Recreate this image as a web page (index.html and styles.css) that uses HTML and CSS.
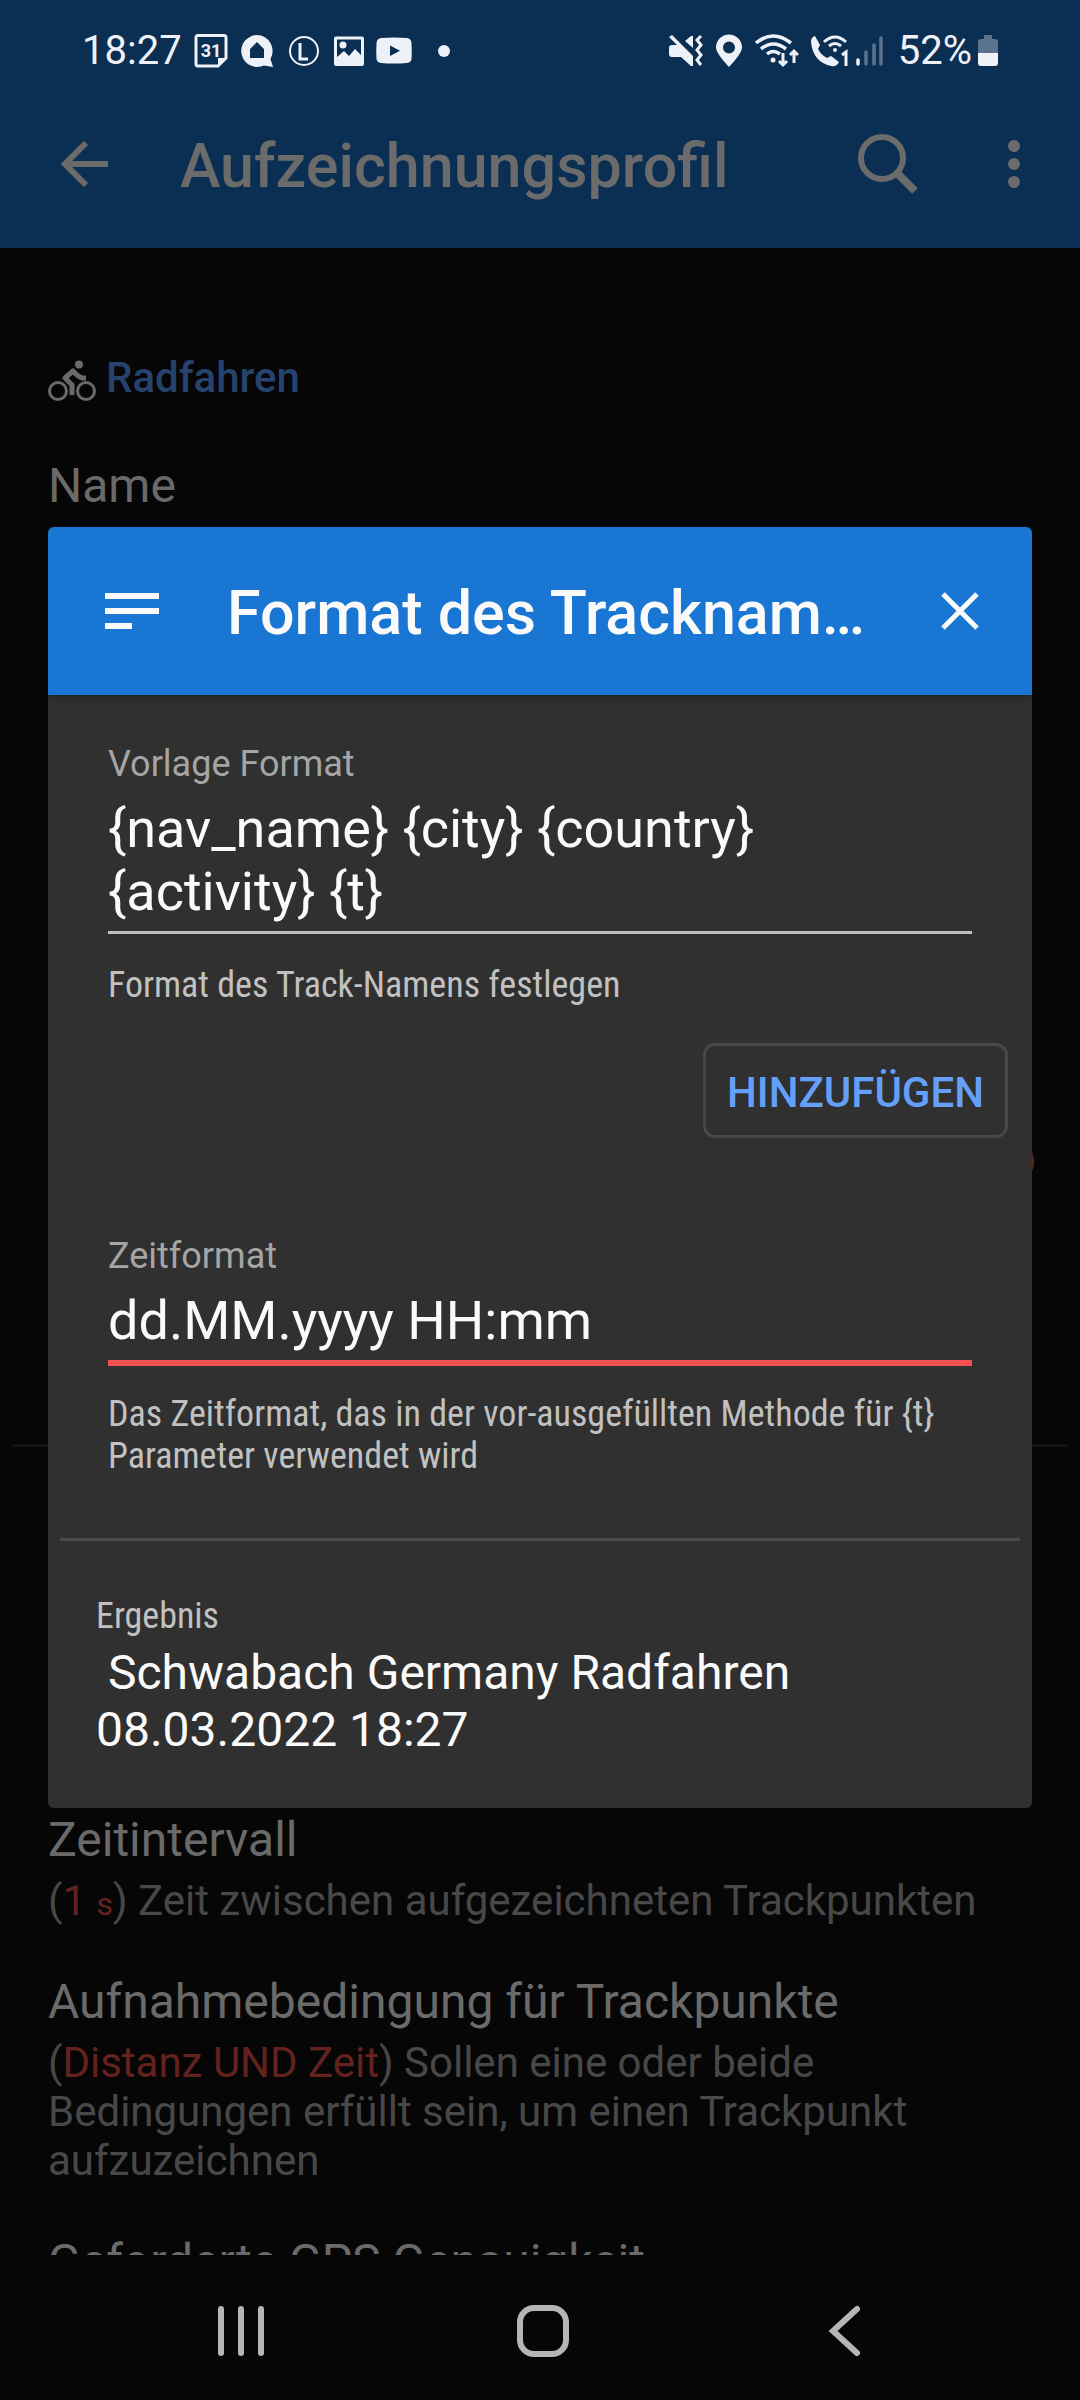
FILE: index.html
```html
<!DOCTYPE html>
<html lang="de">
<head>
<meta charset="utf-8">
<meta name="viewport" content="width=device-width, initial-scale=1">
<title>Aufzeichnungsprofil</title>
<link rel="stylesheet" href="styles.css">
</head>
<body>
<div class="screen">
  <div class="status-bar">
    <div class="status-group">
      <span class="clock">18:27</span>
      <svg class="status-icon" width="34" height="36" viewBox="0 0 34 36"><path d="M4 2.500H30Q32 2.500 32 4.500V25L24 33H4Q2 33 2 31V4.500Q2 2.500 4 2.500Z" fill="none" stroke="currentColor" stroke-width="3"/><path d="M24 33V25H32Z" fill="currentColor"/><text x="17" y="24" text-anchor="middle" class="icon-date">31</text></svg>
      <svg class="status-icon" width="34" height="36" viewBox="0 0 34 36"><path d="M17 2A16 16 0 1 0 24 32.500L33 34L30.500 26A16 16 0 0 0 17 2ZM17 9L24 16V25H10V16Z" fill="currentColor" fill-rule="evenodd"/></svg>
      <svg class="status-icon icon-wide-gap" width="32" height="36" viewBox="0 0 32 36"><circle cx="16" cy="18" r="14" fill="none" stroke="currentColor" stroke-width="2"/><path d="M12 10V26H20" fill="none" stroke="currentColor" stroke-width="3"/></svg>
      <svg class="status-icon" width="30" height="36" viewBox="0 0 30 36"><path d="M2 3.500H28Q30 3.500 30 5.500V31Q30 33 28 33H2Q0 33 0 31V5.500Q0 3.500 2 3.500ZM3 6.500V24L10 18L15 23L21 16L27 22V6.500Z" fill="currentColor" fill-rule="evenodd"/><circle cx="9" cy="12" r="3.500" fill="currentColor"/></svg>
      <svg class="status-icon" width="36" height="36" viewBox="0 0 36 36"><path d="M5 5Q18 4 31 5Q35 5.500 35.500 10Q36 18 35.500 26Q35 29.500 31 30Q18 31 5 30Q1 29.500 .5 26Q0 18 .5 10Q1 5.500 5 5ZM14 12.500V23L24 17.700Z" fill="currentColor" fill-rule="evenodd"/></svg>
      <span class="more-dot"></span>
    </div>
    <div class="status-group">
      <svg class="status-icon" width="34" height="36" viewBox="0 0 34 36"><path d="M3 12H8L0 4L3 2L24 23V33H22L12 24H3Q0 24 0 21V15Q0 12 3 12ZM22 3H24V15L16 8Z" fill="currentColor"/><path d="M32 3L28 7L32 12L28 17L32 22L28 27L32 32" fill="none" stroke="currentColor" stroke-width="3"/></svg>
      <svg class="status-icon" width="28" height="36" viewBox="0 0 28 36"><path d="M14 1.500A13 13 0 0 0 1 14.500Q1 20 14 34Q27 20 27 14.500A13 13 0 0 0 14 1.500ZM14 8.500A6 6 0 1 1 14 20.500A6 6 0 1 1 14 8.500Z" fill="currentColor" fill-rule="evenodd"/></svg>
      <svg class="status-icon" width="44" height="36" viewBox="0 0 44 36"><g fill="none" stroke="currentColor" stroke-width="3.500"><path d="M1 10Q18 -4 36 10"/><path d="M6 16Q18 6 31 16"/><path d="M12 21Q18 16 25 21"/><path d="M28 20V32M24 28L28 32L32 28M39 30V18M35 22L39 18L43 22" stroke-width="3"/></g><circle cx="18" cy="27" r="2.500" fill="currentColor"/></svg>
      <svg class="status-icon" width="37" height="36" viewBox="0 0 37 36"><path d="M4 3L9 12L7 16Q10 22 16 25L20 23L28 29Q26 34 20 33Q2 29 0 9Q0 4 4 3Z" fill="currentColor"/><g fill="none" stroke="currentColor" stroke-width="3"><path d="M13 9Q24 -1 35 9"/><path d="M18 13Q24 8 30 13"/><path d="M31 22L35 19V33"/></g><circle cx="24" cy="17" r="2" fill="currentColor"/></svg>
      <svg class="status-icon signal" width="28" height="36" viewBox="0 0 28 36"><g stroke="currentColor" stroke-width="3.500" stroke-linecap="round"><path d="M2 27V31"/><g opacity=".35"><path d="M10 19V31M18 12V31M25 5V31"/></g></g></svg>
      <span class="battery-level">52%</span>
      <svg class="status-icon" width="20" height="36" viewBox="0 0 20 36"><path d="M6 2H14V6H17Q20 6 20 9V20H0V9Q0 6 3 6H6Z" fill="currentColor" opacity=".35"/><path d="M0 20H20V30Q20 33 17 33H3Q0 33 0 30Z" fill="currentColor"/></svg>
    </div>
  </div>

  <header class="app-bar">
    <button class="icon-button" aria-label="Zurück"><svg width="48" height="48" viewBox="0 0 48 48" fill="none" stroke="currentColor" stroke-width="6"><path d="M26 3L5 24L26 45M5 24H48"/></svg></button>
    <h1 class="app-title">Aufzeichnungsprofil</h1>
    <button class="icon-button" aria-label="Suchen"><svg width="60" height="60" viewBox="0 0 60 60" fill="none" stroke="currentColor"><circle cx="24" cy="24" r="21" stroke-width="6"/><path d="M39 39L57 57" stroke-width="8"/></svg></button>
    <button class="icon-button overflow-button" aria-label="Weitere Optionen"><svg width="12" height="48" viewBox="0 0 12 48" fill="currentColor"><circle cx="6" cy="6" r="6"/><circle cx="6" cy="24" r="6"/><circle cx="6" cy="42" r="6"/></svg></button>
  </header>

  <main class="settings">
    <div class="profile">
      <svg width="48" height="42" viewBox="0 0 48 42" fill="none" stroke="currentColor"><circle cx="10" cy="31" r="8.500" stroke-width="3"/><circle cx="38" cy="31" r="8.500" stroke-width="3"/><circle cx="31" cy="4.500" r="4" fill="currentColor" stroke="none"/><path d="M38 18H34Q29 16 25 11L17 18L24 25V35" stroke-width="5" stroke-linejoin="round"/></svg>
      <a class="profile-link" href="#profil">Radfahren</a>
    </div>
    <h2 class="setting-title">Name</h2>
    <div class="general"><span class="toggle-knob"></span></div>
    <hr class="section-rule">
    <div class="setting-list">
      <section>
        <h2 class="setting-title">Zeitintervall</h2>
        <p class="setting-text">(<span class="value">1 <small class="unit">s</small></span>) Zeit zwischen aufgezeichneten Trackpunkten</p>
      </section>
      <section>
        <h2 class="setting-title">Aufnahmebedingung für Trackpunkte</h2>
        <p class="setting-text">(<span class="value">Distanz UND Zeit</span>) Sollen eine oder beide Bedingungen erfüllt sein, um einen Trackpunkt aufzuzeichnen</p>
      </section>
      <section>
        <h2 class="setting-title">Geforderte GPS Genauigkeit</h2>
      </section>
    </div>
  </main>

  <nav class="nav-bar">
    <button class="icon-button" aria-label="Letzte Apps"><svg width="54" height="54" viewBox="0 0 54 54" stroke="currentColor" stroke-width="6" stroke-linecap="round"><path d="M7 5V49M27 5V49M47 5V49"/></svg></button>
    <button class="icon-button" aria-label="Startbildschirm"><svg width="54" height="54" viewBox="0 0 54 54" fill="none" stroke="currentColor" stroke-width="6"><rect x="4" y="4" width="46" height="46" rx="14"/></svg></button>
    <button class="icon-button" aria-label="Zurück"><svg width="54" height="54" viewBox="0 0 54 54" fill="none" stroke="currentColor" stroke-width="6" stroke-linecap="round"><path d="M39 5L15 27L39 49"/></svg></button>
  </nav>

  <div class="overlay">
    <form class="dialog" role="dialog" aria-labelledby="dialog-title">
      <div class="dialog-header">
        <svg width="54" height="36" viewBox="0 0 54 36" fill="currentColor"><path d="M0 0H54V6H0ZM0 15H54V21H0ZM0 30H27V36H0Z"/></svg>
        <h2 class="dialog-title" id="dialog-title">Format des Tracknam…</h2>
        <button type="button" class="icon-button" aria-label="Schließen"><svg width="38" height="38" viewBox="0 0 38 38" stroke="currentColor" stroke-width="5"><path d="M2 2L36 36M36 2L2 36"/></svg></button>
      </div>
      <div class="field">
        <label class="field-label" for="template">Vorlage Format</label>
        <textarea class="field-input" id="template" rows="2" spellcheck="false">{nav_name} {city} {country} {activity} {t}</textarea>
        <p class="hint">Format des Track-Namens festlegen</p>
      </div>
      <button type="button" class="add-button">HINZUFÜGEN</button>
      <div class="field">
        <label class="field-label" for="time-format">Zeitformat</label>
        <input class="field-input field-input-active" id="time-format" type="text" value="dd.MM.yyyy HH:mm">
        <p class="hint hint-active">Das Zeitformat, das in der vor-ausgefüllten Methode für {t} Parameter verwendet wird</p>
      </div>
      <div class="result">
        <p class="result-label">Ergebnis</p>
        <output class="result-value" for="template time-format"> Schwabach Germany Radfahren 08.03.2022 18:27</output>
      </div>
    </form>
  </div>
</div>
</body>
</html>
```
FILE: styles.css
```css
* { box-sizing: border-box; }

body {
  margin: 0;
  background: #060606;
  font-family: Roboto, sans-serif;
}

h1, h2, p { margin: 0; }
svg { display: block; flex: none; }

.screen {
  position: relative;
  display: flex;
  flex-direction: column;
  height: 100vh;
  overflow: hidden;
}

.icon-button {
  flex: none;
  padding: 0;
  border: 0;
  background: none;
  color: inherit;
}

/* System status bar */
.status-bar {
  display: flex;
  justify-content: space-between;
  height: 80px;
  padding: 20px 82px 0 82px;
  background: #0a2f53;
  color: #eef1f8;
}

.status-group {
  display: flex;
  align-items: center;
  gap: 12px;
  height: 62px;
}

.clock, .battery-level {
  font-size: 40px;
  line-height: 48px;
}

.battery-level { margin: 0 -6px 0 2px; }
.signal { margin-left: -4px; }
.icon-wide-gap { margin: 0 2px; }
.icon-date { font-size: 18px; font-weight: 700; fill: currentColor; }

.more-dot {
  width: 12px;
  height: 12px;
  margin-left: 14px;
  border-radius: 50%;
  background: currentColor;
}

/* App bar */
.app-bar {
  display: flex;
  align-items: center;
  height: 168px;
  padding: 0 60px;
  background: #0a2f53;
  color: #6b6b6b;
}

.app-title {
  flex: 1;
  margin-left: 72px;
  padding-top: 4px;
  font-size: 61px;
  font-weight: 500;
  line-height: 72px;
}

.overflow-button { margin-left: 90px; }

/* Settings behind the dialog */
.settings {
  flex: 1;
  min-height: 0;
  overflow: hidden;
  padding-top: 106px;
  color: #6a6a6a;
}

.profile {
  display: flex;
  align-items: flex-end;
  gap: 10px;
  height: 48px;
  margin: 0 48px 56px;
}

.profile-link {
  color: #27426d;
  font-size: 42px;
  font-weight: 500;
  line-height: 48px;
  text-decoration: none;
}

.setting-title {
  margin: 0 48px;
  font-size: 48px;
  font-weight: 400;
  line-height: 56px;
}

.general {
  display: flex;
  justify-content: flex-end;
  height: 930px;
  padding: 624px 46px 0;
}

.toggle-knob {
  width: 48px;
  height: 48px;
  border-radius: 50%;
  background: #64221f;
}

.section-rule {
  height: 3px;
  margin: 0 12px;
  border: 0;
  background: #131313;
}

.setting-list {
  display: flex;
  flex-direction: column;
  gap: 49px;
  padding-top: 365px;
}

.setting-text {
  margin: 8px 48px 0;
  color: #484848;
  font-size: 42px;
  line-height: 49px;
}

.value { color: #64221f; }
.unit { font-size: 32px; line-height: 1; }

/* System navigation */
.nav-bar {
  display: flex;
  justify-content: space-between;
  align-items: center;
  height: 145px;
  padding: 6px 208px 0 214px;
  background: #060606;
  color: #b5b5b5;
}

/* Dialog */
.overlay {
  position: absolute;
  inset: 80px 0 145px;
  display: flex;
  align-items: center;
  padding: 0 48px;
}

.dialog {
  flex: 1;
  overflow: hidden;
  border-radius: 6px;
  background: #303030;
  color: #fafafa;
}

.dialog-header {
  position: relative;
  display: flex;
  align-items: center;
  height: 168px;
  padding: 0 53px 0 57px;
  background: #1976d2;
  box-shadow: 0 2px 8px rgba(0, 0, 0, .3);
}

.dialog-title {
  flex: 1;
  margin-left: 68px;
  padding-top: 4px;
  font-size: 61px;
  font-weight: 500;
  line-height: 72px;
  white-space: nowrap;
}

.field { padding: 48px 60px 0; }

.field-label {
  display: block;
  margin-bottom: 12px;
  color: #a5a5a5;
  font-size: 36px;
  line-height: 42px;
}

.field-input {
  display: block;
  width: 100%;
  padding: 0 12px 8px 0;
  border: 0;
  border-bottom: 3px solid #c1bec0;
  border-radius: 0;
  outline: 0;
  background: none;
  color: inherit;
  font-family: inherit;
  font-size: 54px;
  line-height: 63px;
  resize: none;
  overflow: hidden;
}

.field-input-active {
  height: 77px;
  border-bottom: 6px solid #f5524f;
}

.hint, .result-label {
  color: #c1c1c1;
  font-family: "Roboto Condensed", "Liberation Sans Narrow", Roboto, sans-serif;
  font-size: 36px;
  line-height: 42px;
}

.hint { margin-top: 30px; }
.hint-active { margin-top: 27px; }

.add-button {
  display: block;
  height: 95px;
  margin: 37px 24px 49px auto;
  padding: 4px 21px 0;
  border: 3px solid #484848;
  border-radius: 12px;
  background: none;
  color: #64a0fa;
  font-family: inherit;
  font-size: 42px;
  font-weight: 500;
}

.result {
  margin: 61px 12px 0;
  padding: 54px 36px 50px;
  border-top: 3px solid #4a4a4a;
}

.result-value {
  display: block;
  margin-top: 7px;
  font-size: 48px;
  line-height: 57px;
  white-space: pre-wrap;
}
```
